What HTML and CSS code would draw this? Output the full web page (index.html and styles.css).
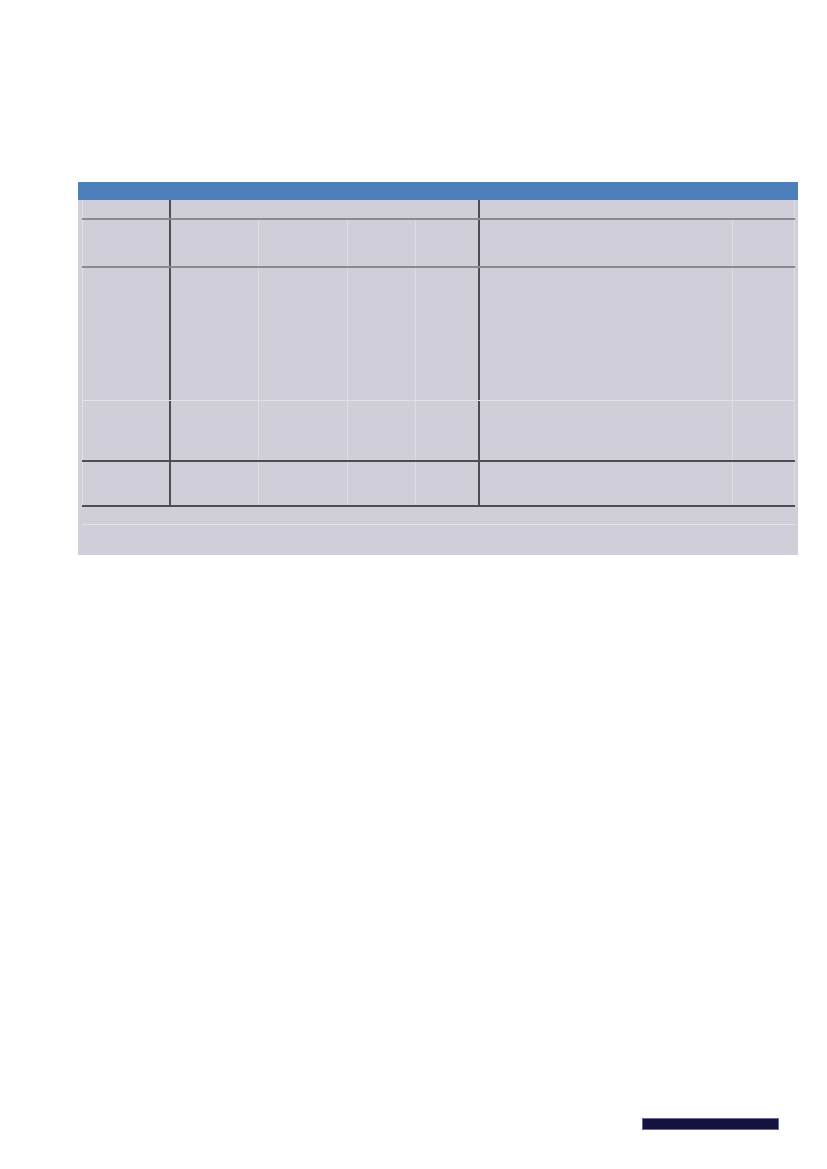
FILE: index.html
```html
<!DOCTYPE html>
<html lang="en">
<head>
<meta charset="utf-8">
<title>Table</title>
<link rel="stylesheet" href="styles.css">
</head>
<body>
<div class="page">
  <div class="sheet">
    <div class="sheet-head"></div>
    <div class="sheet-body">
      <div class="grid">
        <div class="row r1">
          <div class="c"></div><div class="c dark span4"></div><div class="c dark span2"></div>
        </div>
        <div class="row r2">
          <div class="c"></div><div class="c dark"></div><div class="c faint"></div><div class="c faint"></div><div class="c faint"></div><div class="c dark"></div><div class="c faint"></div>
        </div>
        <div class="row r3">
          <div class="c"></div><div class="c dark"></div><div class="c faint"></div><div class="c faint"></div><div class="c faint"></div><div class="c dark"></div><div class="c faint"></div>
        </div>
        <div class="row r4">
          <div class="c"></div><div class="c dark"></div><div class="c faint"></div><div class="c faint"></div><div class="c faint"></div><div class="c dark"></div><div class="c faint"></div>
        </div>
        <div class="row r5">
          <div class="c"></div><div class="c dark"></div><div class="c faint"></div><div class="c faint"></div><div class="c faint"></div><div class="c dark"></div><div class="c faint"></div>
        </div>
      </div>
      <div class="foot-a"></div>
      <div class="foot-b"></div>
    </div>
  </div>
  <div class="footer-bar"></div>
</div>
</body>
</html>
```

FILE: styles.css
```css
html, body {
  margin: 0;
  padding: 0;
  background: #ffffff;
  font-family: "Liberation Sans", Arial, sans-serif;
}

.page {
  width: 827px;
  height: 1169px;
  display: flex;
  flex-direction: column;
}

.sheet {
  margin-top: 182px;
  margin-left: 78px;
  width: 720px;
  display: flex;
  flex-direction: column;
}

.sheet-head {
  height: 18px;
  background: #4b80bb;
}

.sheet-body {
  background: #d0ced9;
  padding: 0 3px 0 4px;
  display: flex;
  flex-direction: column;
}

.grid {
  display: flex;
  flex-direction: column;
}

.row {
  display: grid;
  grid-template-columns: 87px 89px 89px 68px 63px 254px 63px;
}

.r1 { height: 18px; border-bottom: 2px solid #8a8990; }
.r2 { height: 46px; border-bottom: 2px solid #8a8990; }
.r3 { height: 132px; border-bottom: 1px solid rgba(255, 255, 255, 0.4); }
.r4 { height: 59px; border-bottom: 2px solid #4e4d53; }
.r5 { height: 43px; border-bottom: 2px solid #4e4d53; }

.c {
  border-left: 1px solid transparent;
}

.row .c:first-child {
  border-left: 1px solid rgba(255, 255, 255, 0.3);
}

.row .c:last-child {
  border-right: 1px solid rgba(255, 255, 255, 0.3);
}

.dark {
  border-left: 2px solid #4e4d53;
}

.faint {
  border-left: 1px solid rgba(255, 255, 255, 0.3);
}

.span4 { grid-column: span 4; }
.span2 { grid-column: span 2; }

.foot-a {
  height: 17px;
  border-bottom: 1px solid rgba(255, 255, 255, 0.4);
}

.foot-b {
  height: 30px;
}

.footer-bar {
  margin-top: 563px;
  margin-left: 642px;
  width: 135px;
  height: 10px;
  background: #141340;
  border: 1px solid #6b6a92;
}
```
